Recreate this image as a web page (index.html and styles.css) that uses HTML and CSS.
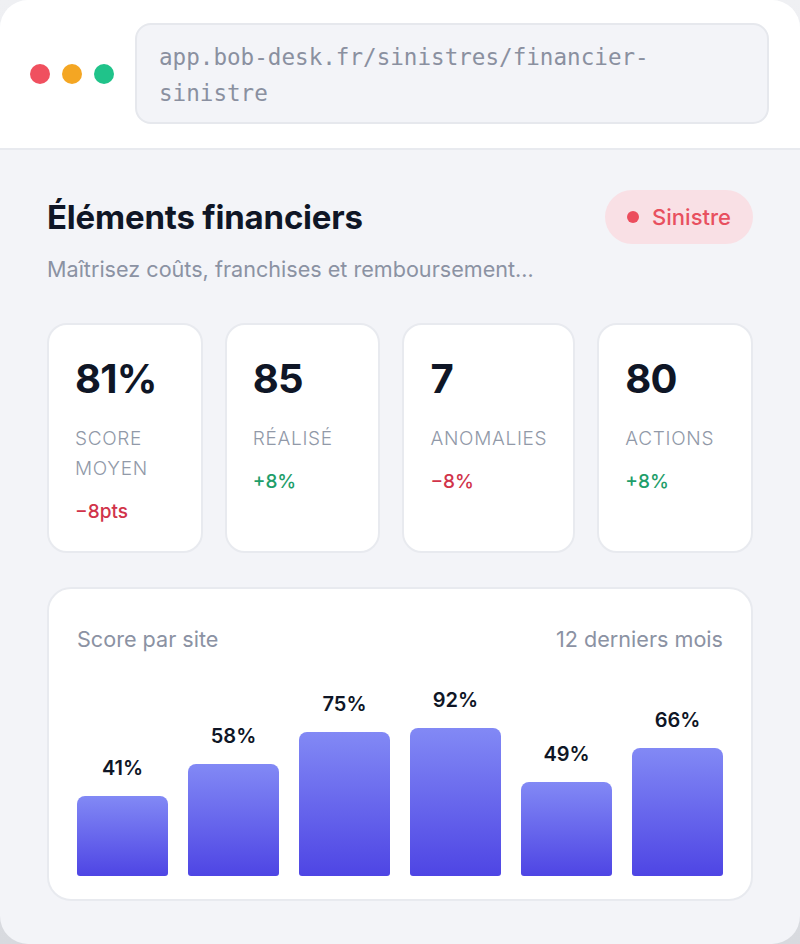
FILE: index.html
```html
<!DOCTYPE html>
<html lang="fr">
<head>
<meta charset="UTF-8">
<meta name="viewport" content="width=device-width, initial-scale=1.0">
<title>Éléments financiers</title>
<link rel="stylesheet" href="styles.css">
</head>
<body>
<div class="window">
    <div class="topbar">
        <div class="dots">
            <span class="dot dot-red"></span>
            <span class="dot dot-yellow"></span>
            <span class="dot dot-green"></span>
        </div>
        <div class="url">app.bob-desk.fr/sinistres/financier-sinistre</div>
    </div>

    <div class="content">
        <div class="header">
            <h1>Éléments financiers</h1>
            <span class="badge"><span class="badge-dot"></span>Sinistre</span>
        </div>
        <p class="subtitle">Maîtrisez coûts, franchises et remboursement…</p>

        <div class="stats">
            <div class="stat">
                <div class="stat-value">81%</div>
                <div class="stat-label">Score moyen</div>
                <div class="stat-delta down">−8pts</div>
            </div>
            <div class="stat">
                <div class="stat-value">85</div>
                <div class="stat-label">Réalisé</div>
                <div class="stat-delta up">+8%</div>
            </div>
            <div class="stat">
                <div class="stat-value">7</div>
                <div class="stat-label">Anomalies</div>
                <div class="stat-delta down">−8%</div>
            </div>
            <div class="stat">
                <div class="stat-value">80</div>
                <div class="stat-label">Actions</div>
                <div class="stat-delta up">+8%</div>
            </div>
        </div>

        <div class="chart">
            <div class="chart-head">
                <span>Score par site</span>
                <span>12 derniers mois</span>
            </div>
            <div class="bars">
                <div class="bar-col"><span class="bar-value">41%</span><div class="bar" style="height: 80px"></div></div>
                <div class="bar-col"><span class="bar-value">58%</span><div class="bar" style="height: 112px"></div></div>
                <div class="bar-col"><span class="bar-value">75%</span><div class="bar" style="height: 144px"></div></div>
                <div class="bar-col"><span class="bar-value">92%</span><div class="bar" style="height: 148px"></div></div>
                <div class="bar-col"><span class="bar-value">49%</span><div class="bar" style="height: 94px"></div></div>
                <div class="bar-col"><span class="bar-value">66%</span><div class="bar" style="height: 128px"></div></div>
            </div>
        </div>
    </div>
</div>
</body>
</html>
```

FILE: styles.css
```css
body {
    margin: 0;
    padding: 0;
    background: linear-gradient(to bottom, #eff0f3, #d8dadf);
    font-family: Inter, "Noto Sans", sans-serif;
    color: #0f172a;
}
.window {
    width: 800px;
    height: 944px;
    background-color: #f3f4f8;
    border-radius: 28px;
    overflow: hidden;
    box-sizing: border-box;
}
.topbar {
    background-color: #fff;
    height: 150px;
    box-sizing: border-box;
    border-bottom: 2px solid #e8eaef;
    display: flex;
    align-items: center;
    padding: 0 31px 0 30px;
    gap: 21px;
}
.dots {
    display: flex;
    gap: 12px;
}
.dot {
    width: 20px;
    height: 20px;
    border-radius: 50%;
}
.dot-red {
    background-color: #f0505f;
}
.dot-yellow {
    background-color: #f4a623;
}
.dot-green {
    background-color: #20c38a;
}
.url {
    flex: 1;
    background-color: #f3f4f8;
    border: 2px solid #e6e8ed;
    border-radius: 16px;
    padding: 14px 22px 11px;
    font-family: "DejaVu Sans Mono", "Liberation Mono", monospace;
    font-size: 22.6px;
    line-height: 36px;
    color: #8a90a0;
    margin-top: -2px;
}
.content {
    padding: 40px 47px 0;
}
.header {
    display: flex;
    justify-content: space-between;
    align-items: center;
}
h1 {
    margin: 0;
    font-size: 33px;
    font-weight: 700;
    letter-spacing: -0.2px;
    color: #0f1626;
}
.badge {
    display: flex;
    align-items: center;
    gap: 13px;
    background-color: #f9e0e5;
    color: #e8505f;
    border-radius: 27px;
    height: 54px;
    padding: 0 22px;
    box-sizing: border-box;
    font-size: 22px;
    font-weight: 500;
}
.badge-dot {
    width: 12px;
    height: 12px;
    border-radius: 50%;
    background-color: #ec4d5d;
}
.subtitle {
    margin: 10px 0 0;
    font-size: 21.6px;
    line-height: 30px;
    color: #8b92a3;
}
.stats {
    display: grid;
    grid-template-columns: 1fr 1fr auto 1fr;
    gap: 22px;
    margin-top: 39px;
}
.stat {
    background-color: #fff;
    border: 2px solid #e8eaef;
    border-radius: 20px;
    padding: 30px 26px 25px;
}
.stat-value {
    font-size: 40px;
    line-height: 48px;
    font-weight: 700;
    letter-spacing: -0.8px;
    color: #0f1626;
}
.stat-label {
    margin-top: 21px;
    font-size: 19px;
    line-height: 30px;
    font-weight: 300;
    letter-spacing: 0.7px;
    text-transform: uppercase;
    color: #9199a8;
}
.stat-delta {
    margin-top: 14px;
    font-size: 19px;
    line-height: 28px;
    font-weight: 500;
}
.stat-delta.down {
    color: #d1334a;
}
.stat-delta.up {
    color: #1e9e6a;
}
.chart {
    margin-top: 34px;
    background-color: #fff;
    border: 2px solid #e8eaef;
    border-radius: 24px;
    padding: 36px 28px 23px;
}
.chart-head {
    display: flex;
    justify-content: space-between;
    font-size: 21.6px;
    line-height: 28px;
    color: #8b92a3;
}
.bars {
    display: flex;
    align-items: flex-end;
    gap: 20px;
    height: 200px;
    margin-top: 23px;
}
.bar-col {
    flex: 1;
    display: flex;
    flex-direction: column;
    align-items: center;
}
.bar-value {
    font-size: 20px;
    line-height: 24px;
    font-weight: 600;
    color: #0f1626;
    margin-bottom: 16px;
}
.bar {
    width: 100%;
    border-radius: 8px 8px 3px 3px;
    background: linear-gradient(to bottom, #8289f5, #4e45e4);
}
```
